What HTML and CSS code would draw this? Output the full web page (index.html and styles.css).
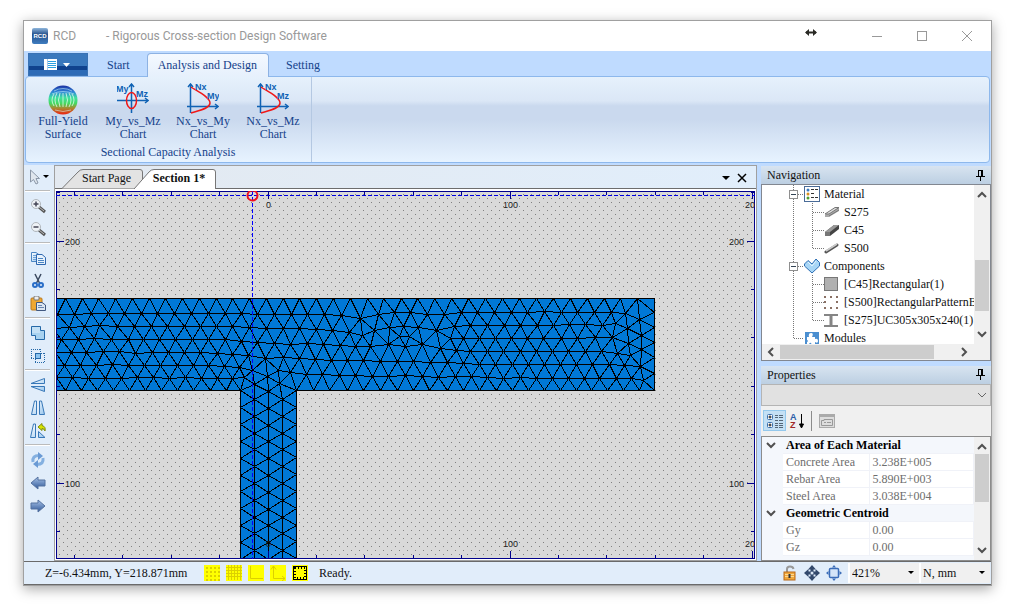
FILE: index.html
```html
<!DOCTYPE html>
<html lang="en">
<head>
<meta charset="utf-8">
<title>RCD - Rigorous Cross-section Design Software</title>
<link rel="stylesheet" href="styles.css">
</head>
<body>
<svg class="defs" width="0" height="0" aria-hidden="true">
  <defs>
    <linearGradient id="steel" x1="0" y1="0" x2="0" y2="1"><stop offset="0" stop-color="#a9c4ea"/><stop offset="1" stop-color="#2f5796"/></linearGradient>
    <linearGradient id="pale" x1="0" y1="0" x2="1" y2="1"><stop offset="0" stop-color="#fff"/><stop offset="1" stop-color="#9cc8ee"/></linearGradient>
    <linearGradient id="rcd" x1="0" y1="0" x2="0" y2="1"><stop offset="0" stop-color="#8fb6dc"/><stop offset=".4" stop-color="#24508c"/><stop offset="1" stop-color="#3f7dc0"/></linearGradient>
    <linearGradient id="yield" x1="0" y1="0" x2="0" y2="1"><stop offset="0" stop-color="#1c2fa0"/><stop offset=".22" stop-color="#2e86d8"/><stop offset=".42" stop-color="#3fe0a0"/><stop offset=".62" stop-color="#46d860"/><stop offset=".78" stop-color="#a88a30"/><stop offset="1" stop-color="#f02010"/></linearGradient>
    <g id="up"><path d="M1 6 5 2 9 6" fill="none" stroke="#505050" stroke-width="2"/></g>
    <g id="guide-parent" class="guide-line"><path d="M29.5 0V18M30 9.5H40"/></g>
    <g id="guide-child" class="guide-line"><path d="M29.5 0V18M48.5 0V18M49 9.5H60"/></g>
    <g id="guide-child-last" class="guide-line"><path d="M29.5 0V18M48.5 0V9M49 9.5H60"/></g>
    <g id="guide-last" class="guide-line"><path d="M29.5 0V9M30 9.5H40"/></g>
    <g id="box"><rect x="25.500" y="5.500" width="8" height="8" fill="#fff" stroke="#8f8f8f"/><path d="M27 9.500H32" stroke="#345"/></g>
    <g id="lens"><path d="M9 9 15 14" stroke="#555" stroke-width="3"/><path d="M9 9 14 13" stroke="#bbb"/><circle cx="6" cy="6" r="4.500" fill="#eef2f6" stroke="#b0b6bc"/></g>
    <g id="pin"><path d="M2 .5H7M2.500 0V6M5.500 0V6M6.500 0V6M0 6.500H9M4.500 7V11" fill="none" stroke="#000"/></g>
  </defs>
</svg>

<main class="window">
  <header class="titlebar">
    <svg class="app-icon" width="16" height="16"><rect width="16" height="16" rx="2" fill="url(#rcd)"/><text x="8" y="10" text-anchor="middle" class="app-icon-text">RCD</text></svg>
    <span class="app-name">RCD</span>
    <span class="app-title">- Rigorous Cross-section Design Software</span>
    <svg class="resize-mark" width="12" height="9"><path d="M1 4.500H11" stroke="#2a2a25" stroke-width="2"/><path d="M0 4.500 4 1V8ZM12 4.500 8 1V8Z" fill="#2a2a25"/></svg>
    <div class="window-buttons">
      <button aria-label="Minimize"><svg width="12" height="12"><path d="M1 6.500H11" stroke="#999"/></svg></button>
      <button aria-label="Maximize"><svg width="12" height="12"><rect x="1.500" y="1.500" width="9" height="9" fill="none" stroke="#999"/></svg></button>
      <button aria-label="Close"><svg width="12" height="12"><path d="M1 1 11 11M11 1 1 11" stroke="#999"/></svg></button>
    </div>
  </header>

  <nav class="tabs" aria-label="Ribbon tabs">
    <button class="app-menu" aria-label="Application menu"><svg width="28" height="12"><rect width="13" height="11" fill="#fff"/><path d="M3.500 0V11" stroke="#a8c8ea"/><path d="M4 2.500H12M4 4.500H12M4 6.500H12M4 8.500H12" stroke="#2ba0e0"/><path d="M19 4H26L22.500 8Z" fill="#fff"/></svg></button>
    <button class="tab">Start</button>
    <button class="tab tab-active">Analysis and Design</button>
    <button class="tab">Setting</button>
  </nav>

  <section class="ribbon">
    <div class="group">
      <div class="commands">
        <button class="command">
          <svg width="32" height="32"><circle cx="16" cy="17" r="14.500" fill="url(#yield)"/><g fill="none" stroke="#eaffef" stroke-opacity=".75"><path d="M7 11Q3 17 7 23M10 10Q6 17 10 24M13 10Q10 17 13 24M25 11Q29 17 25 23M22 10Q26 17 22 24M19 10Q22 17 19 24M16 10V24"/></g><g fill="none" stroke="#dff" stroke-opacity=".5"><path d="M7 8Q16 3 25 8M5 11Q16 6 27 11M8 27Q16 30 24 27"/></g></svg>
          <span>Full-Yield Surface</span>
        </button>
        <button class="command">
          <svg width="32" height="32"><g stroke="#0f62b4" stroke-width="1.500" fill="none"><path d="M14.500 30V1M0 17.500H31"/><path d="M12 4 14.500 1 17 4M28 15 31 17.500 28 20"/></g><ellipse cx="14.500" cy="17.500" rx="5" ry="8" fill="none" stroke="#f01818" stroke-width="1.500"/><text class="axis-name" x="-1" y="9">My</text><text class="axis-name" x="19" y="14">Mz</text></svg>
          <span>My_vs_Mz Chart</span>
        </button>
        <button class="command">
          <svg width="32" height="32"><g stroke="#0f62b4" stroke-width="1.500" fill="none"><path d="M3.500 30V1M0 23.500H31"/><path d="M1 4 3.500 1 6 4M28 21 31 23.500 28 26"/></g><path d="M4 4C10 8 23 14 23 20S10 28 4 30" fill="none" stroke="#f01818" stroke-width="1.500"/><text class="axis-name" x="8" y="7">Nx</text><text class="axis-name" x="20" y="16">My</text></svg>
          <span>Nx_vs_My Chart</span>
        </button>
        <button class="command">
          <svg width="32" height="32"><g stroke="#0f62b4" stroke-width="1.500" fill="none"><path d="M3.500 30V1M0 23.500H31"/><path d="M1 4 3.500 1 6 4M28 21 31 23.500 28 26"/></g><path d="M4 4C10 8 23 14 23 20S10 28 4 30" fill="none" stroke="#f01818" stroke-width="1.500"/><text class="axis-name" x="8" y="7">Nx</text><text class="axis-name" x="20" y="16">Mz</text></svg>
          <span>Nx_vs_Mz Chart</span>
        </button>
      </div>
      <div class="group-name">Sectional Capacity Analysis</div>
    </div>
  </section>

  <div class="workspace">
    <aside class="toolbar" aria-label="Tools">
      <button aria-label="Select"><svg width="24" height="16"><path d="M4.500 1V13L7.500 10.500 10 15 12 14 10 9.500H13.500Z" fill="#dfe6ee" stroke="#8a97a8"/><path d="M17 6H23L20 9Z" fill="#000"/></svg></button>
      <hr>
      <button aria-label="Zoom in"><svg width="16" height="16"><use href="#lens"/><path d="M3.500 6H8.500M6 3.500V8.500" stroke="#445" stroke-width="1.500"/></svg></button>
      <button aria-label="Zoom out"><svg width="16" height="16"><use href="#lens"/><path d="M3.500 6H8.500" stroke="#445" stroke-width="1.500"/></svg></button>
      <hr>
      <button aria-label="Copy"><svg width="16" height="16"><path d="M1.500 2.500H6L9.500 5V11.500H1.500Z" fill="url(#pale)" stroke="#4b86c4"/><path d="M3 5.500H7M3 7.500H7M3 9.500H7" stroke="#6fa3d8"/><path d="M6.500 4.500H12L15.500 7.500V14.500H6.500Z" fill="#e8f2fc" stroke="#2f68b0"/><path d="M8 8.500H13M8 10.500H14M8 12.500H14" stroke="#4b86c4"/></svg></button>
      <button aria-label="Cut"><svg width="16" height="16"><path d="M5 1 9.500 10M11 1 6.500 10" stroke="#3c4a60" stroke-width="1.500"/><circle cx="5" cy="12" r="2" fill="none" stroke="#2a6ec8" stroke-width="2"/><circle cx="11" cy="12" r="2" fill="none" stroke="#2a6ec8" stroke-width="2"/></svg></button>
      <button aria-label="Paste"><svg width="16" height="16"><rect x="1" y="2" width="11" height="12" rx="1" fill="#f0a832" stroke="#b87820"/><rect x="4" y="0" width="5" height="4" rx="1" fill="#eee" stroke="#777"/><path d="M6.500 6.500H12L15.500 9V14.500H6.500Z" fill="#dce6f2" stroke="#405880"/><path d="M8 9.500H12M8 11.500H14" stroke="#6a86b0"/></svg></button>
      <hr>
      <button aria-label="Union"><svg width="16" height="16"><path d="M1.500 1.500H10.500V5.500H14.500V14.500H5.500V10.500H1.500Z" fill="#a8d2f0" stroke="#2468a8"/><path d="M2 2H10V8H2Z" fill="#d4eafa" opacity=".6"/></svg></button>
      <button aria-label="Intersect"><svg width="16" height="16"><path d="M1 1.500H11M1.500 1V11M10.500 1V5M1 10.500H5M11 5.500H15M5 14.500H15M14.500 5V15M5.500 11V15" fill="none" stroke="#2468a8" stroke-dasharray="1 1"/><rect x="5.500" y="5.500" width="5" height="5" fill="#8cc4f0" stroke="#2468a8"/></svg></button>
      <hr>
      <button aria-label="Flip vertical"><svg width="16" height="16"><path d="M1 6.500 14.500 1.500V6.500ZM1 9.500H14.500V14.500Z" fill="url(#pale)" stroke="#3878b8"/></svg></button>
      <button aria-label="Flip horizontal"><svg width="16" height="16"><path d="M6.500 1V14.500H1.500L4.500 1ZM9.500 1V14.500H14.500L11.500 1Z" fill="url(#pale)" stroke="#3878b8"/></svg></button>
      <button aria-label="Rotate shape"><svg width="16" height="16"><path d="M5.500 1V14.500H.500L3.500 1ZM8.500 8.500V14.500H15Z" fill="url(#pale)" stroke="#3878b8"/><path d="M8 4 12 .500V2.500Q16 3.500 15 8 14 5.500 12 5.500V7.500Z" fill="#d8e400" stroke="#7d8c10"/></svg></button>
      <hr>
      <button aria-label="Refresh"><svg width="16" height="16"><g fill="none" stroke="#84b0e0" stroke-width="3"><path d="M3 10Q2 3.500 9 3.500M13 6Q14 12.500 7 12.500"/></g><path d="M8 0 13 4 8 8ZM8 8 3 12 8 16Z" fill="#6a9ad4"/></svg></button>
      <button aria-label="Back"><svg width="16" height="16"><path d="M1 8 8 2V5H15V11H8V14Z" fill="url(#steel)" stroke="#5572a0"/></svg></button>
      <button aria-label="Forward"><svg width="16" height="16"><path d="M15 8 8 2V5H1V11H8V14Z" fill="url(#steel)" stroke="#5572a0"/></svg></button>
    </aside>

    <section class="document">
      <div class="doc-tabs">
        <button class="doc-tab"><svg width="81" height="20"><path d="M0 19.500 16 3Q18 .500 21 .500H78Q80.500 .500 80.500 3V19.500" fill="#e3e3e3" stroke="#777"/></svg><span>Start Page</span></button>
        <button class="doc-tab doc-tab-active"><svg width="82" height="20"><path d="M0 20 15 3Q17 .500 20 .500H79Q81.500 .500 81.500 3V20" fill="#fff" stroke="#777"/></svg><span>Section 1*</span></button>
        <button class="doc-button doc-list" aria-label="Open documents"><svg width="8" height="4"><path d="M0 0H8L4 4Z" fill="#000"/></svg></button>
        <button class="doc-button" aria-label="Close document"><svg width="10" height="10"><path d="M1 1 9 9M9 1 1 9" stroke="#000" stroke-width="1.500"/></svg></button>
      </div>
      <svg class="canvas" id="canvas" role="img" aria-label="Cross-section mesh"></svg>
    </section>

    <div class="side">
      <section class="panel">
        <header class="panel-head"><h2>Navigation</h2><button aria-label="Pin Navigation"><svg width="9" height="11"><use href="#pin"/></svg></button></header>
        <div class="tree-box">
          <div class="tree-view">
            <ul class="tree">
              <li><svg class="guide" width="40" height="18"><use href="#guide-parent"/><use href="#box"/></svg><svg width="16" height="16"><rect x=".500" y=".500" width="15" height="15" fill="#fff" stroke="#4a6c98"/><circle cx="4" cy="4" r="1.500" fill="#3a7ac0"/><circle cx="4" cy="8" r="1.500" fill="#d89020"/><circle cx="4" cy="12" r="1.500" fill="#50a030"/><path d="M7 3.500H10M11 3.500H14M7 7.500H10M7 11.500H10M11 11.500H14" stroke="#333"/></svg><span>Material</span></li>
              <li><svg class="guide" width="60" height="18"><use href="#guide-child"/></svg><svg width="16" height="16"><path d="M1 11 11 4 15 4V7L5 13H1Z" fill="#aaa"/><path d="M1 10 11 3.500H15L5 10ZM5 12 15 6" fill="#ddd" stroke="#777"/></svg><span>S275</span></li>
              <li><svg class="guide" width="60" height="18"><use href="#guide-child"/></svg><svg width="16" height="16"><path d="M1 10 10 3H15V7L6 14H1Z" fill="#444"/><path d="M1 10 10 3H15L6 10Z" fill="#999"/><path d="M1 10H6V14H1Z" fill="#777"/></svg><span>C45</span></li>
              <li><svg class="guide" width="60" height="18"><use href="#guide-child-last"/></svg><svg width="16" height="16"><path d="M2 12 13 5" stroke="#555" stroke-width="3" stroke-linecap="round"/><path d="M2 11 13 4" stroke="#ccc" stroke-width="1.500"/></svg><span>S500</span></li>
              <li><svg class="guide" width="40" height="18"><use href="#guide-parent"/><use href="#box"/></svg><svg width="16" height="16"><path d="M.500 6 4 2.500 8 6 12 1 15.500 4.500V8L8 15 .500 8Z" fill="#a8d6f6" stroke="#2c6eb4"/><path d="M4 4 8 8 12 3" fill="none" stroke="#e4f4ff"/></svg><span>Components</span></li>
              <li><svg class="guide" width="60" height="18"><use href="#guide-child"/></svg><svg width="16" height="16"><rect x=".500" y="1.500" width="13" height="13" fill="#b0b0b0" stroke="#777"/></svg><span>[C45]Rectangular(1)</span></li>
              <li><svg class="guide" width="60" height="18"><use href="#guide-child"/></svg><svg width="16" height="16"><g fill="#8a7064"><path d="M0 2h2v2H0ZM6 2h2v2H6ZM12 2h2v2h-2ZM0 7h2v2H0ZM12 7h2v2h-2ZM0 13h2v2H0ZM6 13h2v2H6ZM12 13h2v2h-2Z"/></g></svg><span>[S500]RectangularPatternBars(1)</span></li>
              <li><svg class="guide" width="60" height="18"><use href="#guide-child-last"/></svg><svg width="16" height="16"><path d="M0 3H14M0 14H14" stroke="#858585" stroke-width="2"/><path d="M7 3V14" stroke="#858585" stroke-width="3"/></svg><span>[S275]UC305x305x240(1)</span></li>
              <li><svg class="guide" width="40" height="18"><use href="#guide-last"/></svg><svg width="16" height="16"><rect x="1" y="2" width="14" height="14" fill="#4a8ed0"/><path d="M3 7H5Q4 3 7 3T8 7H11V9Q14 8 14 11T11 12V16H7Q8 12 6 13T5 16H3V12Q5 11 3 10Z" fill="#fff"/></svg><span>Modules</span></li>
            </ul>
            <div class="scroll-v"><svg width="10" height="8"><use href="#up"/></svg><i class="nav-thumb"></i><svg class="down" width="10" height="8"><use href="#up"/></svg></div>
          </div>
          <div class="scroll-h"><svg class="left" width="10" height="8"><use href="#up"/></svg><i></i><svg class="right" width="10" height="8"><use href="#up"/></svg></div>
        </div>
      </section>

      <section class="panel">
        <header class="panel-head"><h2>Properties</h2><button aria-label="Pin Properties"><svg width="9" height="11"><use href="#pin"/></svg></button></header>
        <div class="object-picker"><select aria-label="Object"><option></option></select><svg class="down" width="10" height="8"><path d="M1 6 5 2 9 6" fill="none" stroke="#666"/></svg></div>
        <div class="prop-tools">
          <button class="pressed" aria-label="Categorized"><svg width="18" height="16"><rect x="1.500" y="1.500" width="5" height="5" rx="1" fill="#fff" stroke="#3a6fae"/><rect x="1.500" y="9.500" width="5" height="5" rx="1" fill="#fff" stroke="#3a6fae"/><path d="M2.500 4H5.500M4 2.500V5.500M2.500 12H5.500M4 10.500V13.500" stroke="#111"/><path d="M9 2.500H12M13 2.500H17M9 4.500H12M13 4.500H17M9 7.500H12M13 7.500H17M9 10.500H12M13 10.500H17M9 12.500H12M13 12.500H17M9 14.500H12M13 14.500H17" stroke="#567"/></svg></button>
          <button aria-label="Alphabetical"><svg width="18" height="16"><text class="az-a" x="1" y="7">A</text><text class="az-z" x="1" y="15">Z</text><path d="M12.500 1V14M10.500 11 12.500 15 14.500 11Z" stroke="#000" fill="#000"/></svg></button>
          <i></i>
          <button aria-label="Property pages"><svg width="16" height="16"><rect x=".500" y="1.500" width="15" height="13" fill="#ddd" stroke="#aaa"/><path d="M0 3H16" stroke="#aaa" stroke-width="2"/><path d="M2.500 7.500H5V6.500H13.500V12.500H2.500ZM5 9.500H7M8 9.500H12" stroke="#999" fill="none"/></svg></button>
        </div>
        <div class="prop-box">
          <table class="props">
            <colgroup><col class="gutter"><col class="names"><col></colgroup>
            <tbody>
              <tr class="cat"><td><svg class="down" width="10" height="8"><use href="#up"/></svg></td><th colspan="2">Area of Each Material</th></tr>
              <tr><td></td><th>Concrete Area</th><td>3.238E+005</td></tr>
              <tr><td></td><th>Rebar Area</th><td>5.890E+003</td></tr>
              <tr><td></td><th>Steel Area</th><td>3.038E+004</td></tr>
              <tr class="cat"><td><svg class="down" width="10" height="8"><use href="#up"/></svg></td><th colspan="2">Geometric Centroid</th></tr>
              <tr><td></td><th>Gy</th><td>0.00</td></tr>
              <tr><td></td><th>Gz</th><td>0.00</td></tr>
            </tbody>
          </table>
          <div class="scroll-v"><svg width="10" height="8"><use href="#up"/></svg><i class="prop-thumb"></i><svg class="down" width="10" height="8"><use href="#up"/></svg></div>
        </div>
      </section>
    </div>
  </div>

  <footer class="status">
    <span class="position">Z=-6.434mm, Y=218.871mm</span>
    <button aria-label="Grid points"><svg width="16" height="16"><path d="M2 3H16M2 7H16M2 11H16M2 15H16" stroke="#dcd000" stroke-width="2" stroke-dasharray="2 2"/></svg></button>
    <button aria-label="Grid lines"><svg width="16" height="16"><path d="M0 2.500H16M0 5.500H16M0 8.500H16M0 11.500H16M2.500 0V15M5.500 0V15M8.500 0V15M11.500 0V15M14.500 0V15" stroke="#dcd000"/></svg></button>
    <button aria-label="Rulers"><svg width="16" height="16"><path d="M2.500 1V13.500H15" stroke="#dcd000" fill="none"/></svg></button>
    <button aria-label="Axes"><svg width="16" height="16"><path d="M3.500 1V13.500H15M1 4.500 3.500 1 6 4.500M12 11 15 13.500 12 16" stroke="#dcd000" fill="none"/></svg></button>
    <button aria-label="Frame"><svg width="16" height="16"><rect x="1.500" y="1.500" width="13" height="13" fill="none" stroke="#000"/><rect x="3" y="3" width="10" height="10" fill="none" stroke="#000" stroke-width="2" stroke-dasharray="1 2"/></svg></button>
    <span class="ready">Ready.</span>
    <svg width="16" height="16"><path d="M5 7V4Q5 1.500 8 1.500T11.500 4" fill="none" stroke="#999" stroke-width="2"/><rect x="2" y="7" width="11" height="8" fill="#f0a83c" stroke="#b86818"/><path d="M3 9.500H12M3 11.500H12" stroke="#ffd890"/><path d="M7.500 9V13" stroke="#333" stroke-width="2"/></svg>
    <svg width="16" height="16"><path d="M8 0 12 4.500H4ZM8 16 12 11.500H4ZM0 8 4.500 4V12ZM16 8 11.500 4V12Z" fill="#33496c"/><path d="M8 4V12M4 8H12" stroke="#33496c" stroke-width="3"/><circle cx="8" cy="8" r="1.500" fill="#dce8f6"/></svg>
    <svg width="16" height="16"><rect x="3.500" y="3.500" width="9" height="9" rx="1" fill="#d4e4f8" stroke="#3a6cb8" stroke-width="1.500"/><path d="M8 0 10 2.500H6ZM8 16 10 13.500H6ZM0 8 2.500 6V10ZM16 8 13.500 6V10Z" fill="#3a6cb8"/></svg>
    <label class="picker"><select aria-label="Zoom"><option>421%</option></select></label>
    <label class="picker"><select aria-label="Units"><option>N, mm</option></select></label>
  </footer>
</main>
<script src="mesh.js"></script>
</body>
</html>
```

FILE: styles.css
```css
* { box-sizing: border-box; }
body {
  margin: 0;
  min-height: 100vh;
  padding: 20px 20px 23px 23px;
  display: flex;
  background: #fff;
  color: #111;
  font: 12px/18px "Liberation Serif", "Times New Roman", serif;
}
button {
  margin: 0; padding: 0; border: 0;
  background: none;
  font: inherit; color: inherit;
  display: flex; align-items: center; justify-content: center;
}
select { font: inherit; color: inherit; appearance: none; border-radius: 0; }
svg { display: block; flex: none; }
.defs { position: absolute; }
.window {
  flex: 1; min-width: 0;
  display: flex; flex-direction: column;
  border: 1px solid #a0a0a0;
  background: #bfdbff;
  box-shadow: 0 3px 12px rgba(0, 0, 0, .35);
}

.titlebar {
  height: 30px; padding: 0 2px 0 8px;
  display: flex; align-items: center;
  background: #fff; color: #999;
  font: 12px/18px Roboto, "Open Sans", sans-serif;
}
.app-icon-text { font: bold 6px "Liberation Sans", sans-serif; fill: #fff; }
.app-name { width: 53px; margin-left: 5px; }
.resize-mark { margin: 0 37px 8px auto; }
.window-buttons { display: flex; }
.window-buttons button { width: 45px; height: 28px; }

.tabs { display: flex; align-items: flex-end; height: 25px; padding-left: 4px; color: #15428b; }
.app-menu {
  width: 60px; height: 23px;
  background: linear-gradient(#3a78bd 12px, #10428e 12px, #10428e 16px, #2d6bb6 16px);
  border: 1px solid #3a72b4;
}
.tab { height: 23px; padding: 0 16px; border: 1px solid transparent; }
.tab:nth-child(2) { padding: 0 16px 0 18px; }
.tab-active {
  position: relative;
  padding: 0 11px 1px 10px;
  height: 24px; margin-bottom: -1px;
  border-color: #8db2e3; border-bottom: 0;
  border-radius: 4px 4px 0 0;
  background: linear-gradient(#f4f9ff, #e6f0fc);
}
.ribbon {
  margin: 0 1px 2px;
  border: 1px solid #8db8ec; border-radius: 4px;
  height: 87px;
  display: flex;
  background: linear-gradient(#e6f1fc, #dbe7f6 28%, #cad9ee 34%, #cad9ee 50%, #e7f3ff);
  color: #15428b;
}
.group { border-right: 1px solid #b4c8e2; padding: 6px 3px 0 2px; }
.commands { display: flex; }
.command { width: 70px; height: 59px; flex-direction: column; justify-content: flex-start; line-height: 13px; padding: 0 5px; }
.axis-name { font: bold 9px "Liberation Sans", sans-serif; fill: #0f62b4; }
.group-name { text-align: center; padding-top: 1px; }

.workspace { flex: 1; min-height: 0; display: flex; }
.toolbar { width: 30px; padding: 0 4px 0 1px; background: #e1edfa; }
.toolbar button { width: 100%; height: 23px; }
.toolbar hr { height: 2px; margin: 2px 0; border: 0; border-top: 1px solid #bbb; background: #fff; }
.document {
  flex: 1; min-width: 0;
  display: flex; flex-direction: column;
  border: 1px solid #a0a0a0;
  background: #fff;
}
.doc-tabs {
  height: 23px; padding: 0 6px 0 7px;
  display: flex; align-items: flex-end;
  background: linear-gradient(90deg, #e3e9f0, #e1eefb);
  border-bottom: 1px solid #6d6d6d;
}
.doc-tab { position: relative; width: 81px; height: 19px; padding: 0 0 2px 8px; }
.doc-tab svg { position: absolute; left: 0; top: 0; }
.doc-tab span { position: relative; }
.doc-tab-active { width: 82px; height: 20px; margin: 0 0 -1px -9px; font-weight: bold; }
.doc-button { width: 16px; height: 20px; }
.doc-list { margin-left: auto; }
.canvas { flex: 1; min-height: 0; width: auto; margin: 2px 1px 1px 1px; background: #d9d9d9; }
.ruler-text { font: 9px "Liberation Sans", Arial, sans-serif; fill: #222; }

.side { width: 234px; padding: 1px 0 0 4px; display: flex; flex-direction: column; gap: 5px; }
.panel { flex: 1; min-height: 0; display: flex; flex-direction: column; }
.panel-head {
  height: 18px; padding: 0 6px;
  display: flex; align-items: center; justify-content: space-between;
  background: linear-gradient(#d8e4f0, #bccfe2);
}
.panel-head h2 { margin: 0; font: inherit; }
.tree-box {
  flex: 1; min-height: 0;
  display: flex; flex-direction: column;
  border: 1px solid #828790; background: #fff;
}
.tree-view { flex: 1; min-height: 0; display: flex; }
.tree { flex: 1; min-width: 0; margin: 0; padding: 0 0 0 2px; list-style: none; overflow: hidden; }
.tree li { display: flex; align-items: center; height: 18px; white-space: nowrap; }
.tree span { margin-left: 4px; }
.guide-line { fill: none; stroke: #777; stroke-dasharray: 1 1; }
.scroll-v { width: 16px; padding: 6px 0; display: flex; flex-direction: column; align-items: center; background: #f0f0f0; }
.scroll-v i { width: 14px; background: #cdcdcd; }
.scroll-v .down { margin-top: auto; }
.nav-thumb { height: 51px; margin-top: 61px; }
.prop-thumb { height: 48px; margin-top: 3px; }
.down { transform: rotate(180deg); }
.left { transform: rotate(-90deg); }
.right { transform: rotate(90deg); }
.scroll-h { height: 16px; padding: 0 21px 0 4px; display: flex; align-items: center; background: #f0f0f0; }
.scroll-h i { height: 14px; flex: 1; margin: 0 25px 0 4px; background: #cdcdcd; }

.object-picker { display: grid; align-items: center; }
.object-picker > * { grid-area: 1 / 1; }
.object-picker select { width: 100%; height: 22px; border: 1px solid #b4b4b4; background: #e1e1e1; }
.object-picker svg { justify-self: end; margin-right: 4px; pointer-events: none; }
.prop-tools { height: 30px; padding-left: 2px; display: flex; align-items: center; background: #f0f0f0; }
.prop-tools button { width: 23px; height: 21px; }
.prop-tools .pressed { background: #c4e0f5; border: 1px solid #94c8ec; }
.prop-tools i { width: 1px; height: 20px; margin: 0 3px 0 2px; background: #8c8c8c; }
.az-a { font: bold 9px "Liberation Sans", sans-serif; fill: #2a5ca8; }
.az-z { font: bold 9px "Liberation Sans", sans-serif; fill: #a02828; }
.prop-box { flex: 1; min-height: 0; display: flex; border: 1px solid #8c8c8c; background: #f4f7fc; overflow: hidden; }
.props { flex: 1; border-collapse: collapse; table-layout: fixed; width: 100%; align-self: flex-start; line-height: 16px; color: #6d6d6d; }
.gutter { width: 21px; }
.names { width: 86px; }
.props td, .props th { height: 17px; padding: 0 3px; text-align: left; font-weight: normal; background: #fff; border-bottom: 1px solid #f0f2f8; border-right: 1px solid #f0f2f8; }
.props tr > td:first-child { padding: 0 4px; background: #f4f7fc; border: 0; }
.props .cat th { background: #f4f7fc; color: #000; font-weight: bold; border-right: 0; }

.status {
  height: 24px; padding-left: 21px;
  display: flex; align-items: center; gap: 6px;
  border: 1px solid #6a6a6a; border-width: 1px 0;
  background: #e1edfa;
}
.status button { width: 16px; height: 16px; background: #ff0; }
.position { width: 153px; }
.ready { margin: 0 auto 0 5px; }
.picker { display: grid; width: 71px; margin-right: -6px; background: #f0f0f0; border-left: 2px solid #fff; }
.picker:last-child { margin: 0 1px 0 0; }
.picker > *, .picker::after { grid-area: 1 / 1; }
.picker select { width: 100%; height: 20px; padding: 0 2px; border: 0; background: none; }
.picker::after {
  content: "";
  justify-self: end; align-self: center;
  margin-right: 5px;
  border: 3px solid transparent; border-top-color: #000; border-bottom: 0;
}
```

FILE: mesh.js
```js
(function () {
  "use strict";

  var SCALE = 2.42;            // pixels per millimetre
  var ORIGIN_X = 212;          // screen x of Z = 0
  var Y_200 = 50;              // screen y of Y = 200 mm
  var CURSOR = { x: 196, y: 4 };

  // Node rows in thirds of a pixel: [x shift, default y, "x x:y ..."].
  var ROWS = [
    [0, 40, "-55 -5 45 95 145 196 246 296 346 396 446 497 547 597 647 698 748 798 849 900 950"],
    [930, 40, "70 122 172 223 273 325 375 426 477 528 578 630 680 731 780 832 882"],
    [0, 83, "-28 22:88 73:86 124 174 222 272 322 373 424 473 525 574:85 622:86 672:86 722:86 772:86 822:88 873:90 931:98"],
    [930, 82, "54:87 102 150 200:86 251:86 303 351:80 403:80 454 502 552:79 602:80 652:80 702:80 752:80 795:84 838:103 882:80"],
    [0, 123, "-42 5:128 57:125 102 148:121 201 252 303 350 401 450 499 547 597:127 648:128 698:130 747:130 798:133 846:135 896:142 936:150"],
    [930, 120, "42:136 88:127 129:122 175:126 229:134 282:124 331:121 380:121 432 480:121 530 580 627:118 675:118 726 764:114 802:129 843:150 882:125"],
    [930, 153, "118 147"],
    [0, 163, "-12:160 34:162 84 132:160 182 233 280 326 375 425 475 525 573:167 620:172 672:173 720:176 772:175 820:178 870:180 915:184"],
    [930, 160, "30:183 84:178 134:184 185:178 240:189 271 308 356:158 404 453 502 550:158 602 650:158 706:157 757:157 804:174 844:193 882:170"],
    [0, 201, "-34 16:200 62:200 109 158:198 206:199 255:203 305 354:202 402:202 450:202 500:203 547:206 595:211 646:220 698:217 748:218 795:222 844:226 892:226 940:226"],
    [930, 199, "60:227 110:227 160:227 211:230 261:232 288:195 331:197 382:197 430:197 480 528 577 624 674 722 770:204 809:209 882:215"],
    [0, 239, "-5 42 90 138 186:238 234 283 331 380:241 428:240 475:241 522:242 566:246 606:254 684:254 720:260 768:266 817:268 866:271 915:271"],
    [930, 238, "310:235 358:236 406:236 456:236 504 552 600 648 697 748 792:241 840:242 882:264"],
    [930, 278, "36:272 84:272 136:271 186:272 235:275 285:274 333:274 382:276 430 479:276 527 576 624 672 718 768 812:279 850:284"],
    [0, 278, "-32 18:277 66:277 114 164 212 260:277 310:277 358 405:277 452 502 545:280 582:277"],
    [0, 316, "-55 -8 44 92 140 188 237 285 334 382 430 479 527 571 739 790 838 890 940"],
    [930, 316, "60 110 160 208 260 308 358 408 456 504 553 600 648 694 742 790 838 882"]
  ];
  // Web columns: x and the y of the first node; nodes repeat about every 50 units.
  var COLUMNS = [[571, 367], [613, 297], [613, 342], [655, 318], [652, 272], [697, 342], [688, 294], [739, 366]];
  var SINGLE = { 1: true, 4: true, 6: true };
  var STEM_LEFT = 571, STEM_RIGHT = 739, FLANGE_BOTTOM = 316, BOTTOM = 900;

  function nodes() {
    var out = [];
    ROWS.forEach(function (row) {
      row[2].split(" ").forEach(function (item) {
        var p = item.split(":");
        out.push([+p[0] + row[0], p[1] ? +p[1] : row[1]]);
      });
    });
    COLUMNS.forEach(function (c, i) {
      for (var y = c[1]; y < BOTTOM; y += 50.4) {
        out.push([c[0], y]);
        if (SINGLE[i]) break;
      }
    });
    return out;
  }

  function circle(p, a, b, c) {
    var A = p[a], B = p[b], C = p[c];
    var d = 2 * (A[0] * (B[1] - C[1]) + B[0] * (C[1] - A[1]) + C[0] * (A[1] - B[1]));
    if (!d) return null;
    var a2 = A[0] * A[0] + A[1] * A[1], b2 = B[0] * B[0] + B[1] * B[1], c2 = C[0] * C[0] + C[1] * C[1];
    var x = (a2 * (B[1] - C[1]) + b2 * (C[1] - A[1]) + c2 * (A[1] - B[1])) / d;
    var y = (a2 * (C[0] - B[0]) + b2 * (A[0] - C[0]) + c2 * (B[0] - A[0])) / d;
    return { v: [a, b, c], x: x, y: y, r: (A[0] - x) * (A[0] - x) + (A[1] - y) * (A[1] - y) };
  }

  // Bowyer-Watson triangulation.
  function triangulate(list) {
    var n = list.length;
    var p = list.concat([[-90000, -60000], [90000, -61000], [100, 120000]]);
    var tris = [circle(p, n, n + 1, n + 2)];
    for (var i = 0; i < n; i++) {
      var edges = {}, keep = [];
      tris.forEach(function (t) {
        var dx = p[i][0] - t.x, dy = p[i][1] - t.y;
        if (dx * dx + dy * dy >= t.r - 0.001) { keep.push(t); return; }
        [[0, 1], [1, 2], [2, 0]].forEach(function (e) {
          var a = t.v[e[0]], b = t.v[e[1]];
          var k = Math.min(a, b) + "," + Math.max(a, b);
          edges[k] = edges[k] ? 0 : [a, b];
        });
      });
      Object.keys(edges).forEach(function (k) {
        if (!edges[k]) return;
        var t = circle(p, edges[k][0], edges[k][1], i);
        if (t) keep.push(t);
      });
      tris = keep;
    }
    return tris.filter(function (t) {
      if (Math.max.apply(null, t.v) >= n) return false;
      var cx = (p[t.v[0]][0] + p[t.v[1]][0] + p[t.v[2]][0]) / 3;
      var cy = (p[t.v[0]][1] + p[t.v[1]][1] + p[t.v[2]][1]) / 3;
      return cy < FLANGE_BOTTOM || (cx > STEM_LEFT && cx < STEM_RIGHT);
    });
  }

  // Each shared edge is stroked once.
  function meshPath() {
    var p = nodes(), d = "", seen = {};
    function at(i) {
      return (Math.round(p[i][0] / 3) - 6 + 0.5) + " " + (Math.round(p[i][1] / 3) + 94 + 0.5);
    }
    triangulate(p).forEach(function (t) {
      [[0, 1], [1, 2], [2, 0]].forEach(function (e) {
        var a = Math.min(t.v[e[0]], t.v[e[1]]), b = Math.max(t.v[e[0]], t.v[e[1]]);
        if (seen[a + "," + b]) return;
        seen[a + "," + b] = true;
        d += "M" + at(a) + "L" + at(b);
      });
    });
    return d;
  }

  var mesh = meshPath();
  var svg = document.getElementById("canvas");

  function draw() {
    var w = Math.round(svg.getBoundingClientRect().width);
    var h = Math.round(svg.getBoundingClientRect().height);
    var ticks = "", labels = "", i, s, long;
    function text(x, y, value, anchor) {
      labels += '<text class="ruler-text" x="' + x + '" y="' + y + '" text-anchor="' + anchor + '">' + value + "</text>";
    }
    for (i = -4; ORIGIN_X + i * 20 * SCALE < w + 4; i++) {
      s = Math.floor(ORIGIN_X + i * 20 * SCALE) + 0.5;
      long = i % 5 === 0 ? 8 : 4;
      ticks += "M" + s + " 0V" + long + "M" + s + " " + h + "V" + (h - long);
      if (i % 5 === 0) {
        text(s, 17, i * 20, "middle");
        text(s, h - 12, i * 20, "middle");
      }
    }
    for (i = -1; Y_200 + i * 20 * SCALE < h; i++) {
      s = Math.floor(Y_200 + i * 20 * SCALE) + 0.5;
      long = i % 5 === 0 ? 8 : 4;
      ticks += "M0 " + s + "H" + long + "M" + w + " " + s + "H" + (w - long);
      if (i % 5 === 0) {
        text(9, s + 3, 200 - i * 20, "start");
        text(w - 11, s + 3, 200 - i * 20, "end");
      }
    }
    svg.innerHTML =
      '<defs><pattern id="dots" width="8" height="8" patternUnits="userSpaceOnUse">' +
      '<rect x="3" y="3" width="1" height="1" fill="#808080"/><rect x="7" y="7" width="1" height="1" fill="#808080"/></pattern></defs>' +
      '<g shape-rendering="crispEdges" fill="none">' +
      '<rect width="' + w + '" height="' + h + '" fill="url(#dots)"/>' +
      '<path d="M0 107H599V199H241V' + h + 'H184V199H0Z" fill="#0078d7"/>' +
      '<path d="' + mesh + '" stroke="#000"/>' +
      '<path d="M0 107.500H598.500V199.500H240.500V' + h + "M184.500 " + h + 'V199.500H0" stroke="#000"/>' +
      '<path d="' + ticks + "M.5 .5H" + (w - 0.5) + "V" + (h - 0.5) + 'H.5Z" stroke="#00008b"/>' +
      '<path d="M0 ' + (CURSOR.y + 0.5) + "H" + w + '" stroke="#0000e0" stroke-dasharray="4 2"/>' +
      '<path d="M' + (CURSOR.x + 0.5) + " 0V" + h + '" stroke="#0000ff" stroke-dasharray="4 2"/></g>' +
      '<circle cx="' + (CURSOR.x + 0.5) + '" cy="' + (CURSOR.y + 0.5) + '" r="5" fill="none" stroke="#f01020" stroke-width="2"/>' +
      labels;
  }

  draw();
  window.addEventListener("resize", draw);
})();
```
